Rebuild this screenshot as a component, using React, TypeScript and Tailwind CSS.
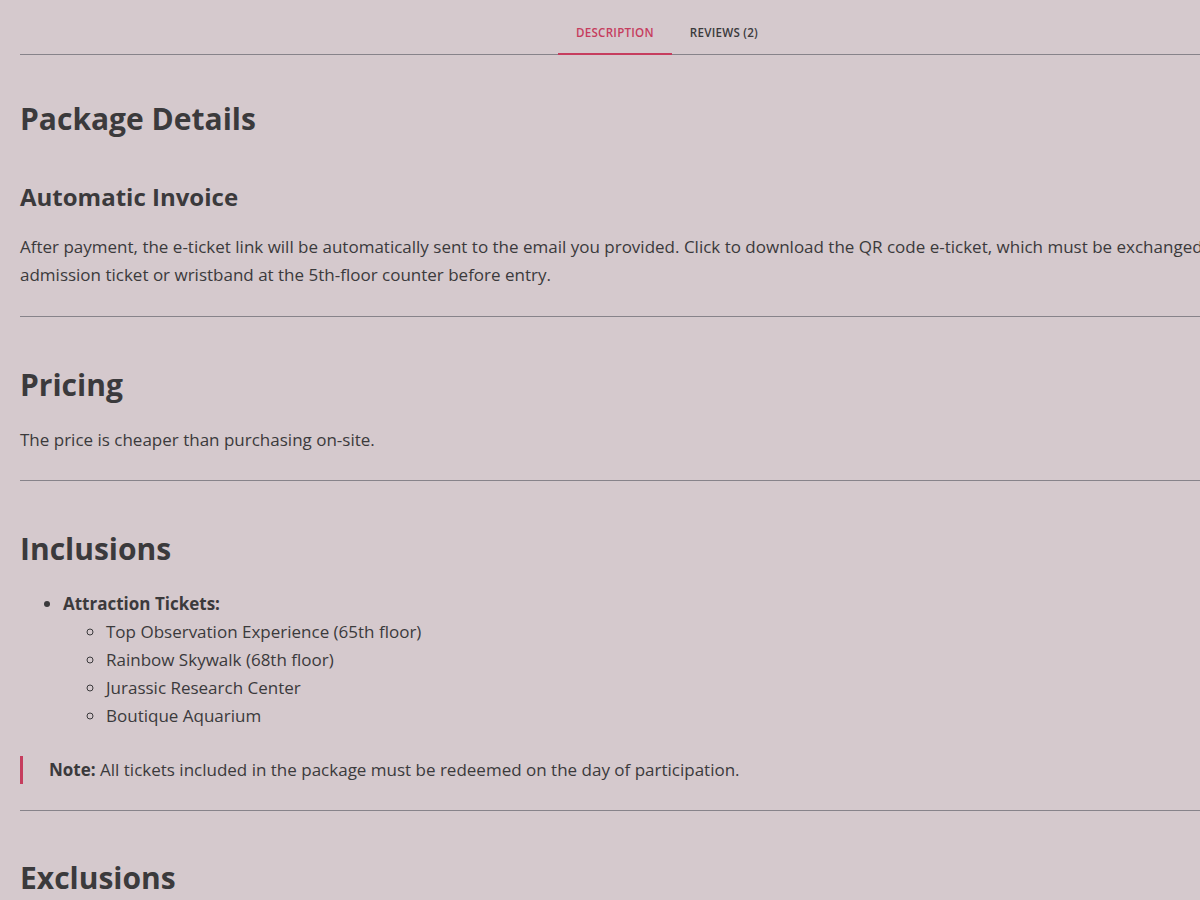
import React from "react";

export default function App() {
  return (
    <div className="min-h-[900px] w-full overflow-hidden bg-[#d5c9cd] text-[#3b3a3c]" style={{ fontFamily: '"Open Sans", "Noto Sans", sans-serif' }}>
      <div className="ml-5 w-[1280px]">
        <div className="flex justify-center border-b border-[#87838a]">
          <div className="flex pl-[14px]">
            <div className="relative px-[18px] pt-[24px] pb-[13px] text-[11.6px] font-semibold tracking-[0.25px] text-[#c63d5e]">
              DESCRIPTION
              <div className="absolute left-0 right-0 -bottom-[1px] h-[2px] bg-[#c63d5e]" />
            </div>
            <div className="px-[18px] pt-[24px] pb-[13px] text-[11.6px] font-semibold tracking-[0.25px] text-[#3b3a3c]">REVIEWS (2)</div>
          </div>
        </div>

        <h2 className="mt-[44px] text-[30px] font-bold leading-[40px]">Package Details</h2>
        <h3 className="mt-[41px] text-[24px] font-bold leading-[34px]">Automatic Invoice</h3>
        <p className="mt-[19px] text-[17px] leading-[28px]">
          After payment, the e-ticket link will be automatically sent to the email you provided. Click to download the QR code e-ticket, which must be exchanged for an admission ticket or wristband at the 5th-floor counter before entry.
        </p>
        <hr className="mt-[27px] border-t border-[#87838a]" />

        <h2 className="mt-[48px] text-[30px] font-bold leading-[40px]">Pricing</h2>
        <p className="mt-[21px] text-[17px] leading-[28px]">The price is cheaper than purchasing on-site.</p>
        <hr className="mt-[26px] border-t border-[#87838a]" />

        <h2 className="mt-[48px] text-[30px] font-bold leading-[40px]">Inclusions</h2>
        <ul className="mt-[21px] list-disc pl-[43px] text-[17px] leading-[28px]">
          <li>
            <span className="font-bold">Attraction Tickets:</span>
            <ul className="list-[circle] pl-[43px]">
              <li>Top Observation Experience (65th floor)</li>
              <li>Rainbow Skywalk (68th floor)</li>
              <li>Jurassic Research Center</li>
              <li>Boutique Aquarium</li>
            </ul>
          </li>
        </ul>
        <div className="mt-[26px] border-l-[3px] border-[#c63d5e] pl-[26px] text-[17px] leading-[28px]">
          <span className="font-bold">Note:</span> All tickets included in the package must be redeemed on the day of participation.
        </div>
        <hr className="mt-[26px] border-t border-[#87838a]" />

        <h2 className="mt-[47px] text-[30px] font-bold leading-[40px]">Exclusions</h2>
      </div>
    </div>
  );
}
